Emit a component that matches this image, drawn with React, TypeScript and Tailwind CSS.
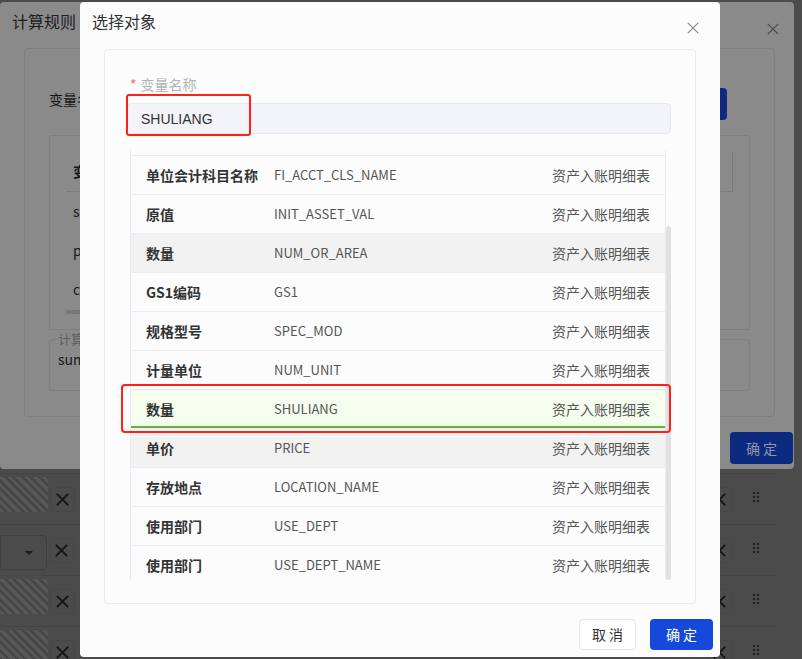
import React from "react";

const fields = [
  { name: "单位会计科目名称", code: "FI_ACCT_CLS_NAME" },
  { name: "原值", code: "INIT_ASSET_VAL" },
  { name: "数量", code: "NUM_OR_AREA", tone: "gray" },
  { name: "GS1编码", code: "GS1" },
  { name: "规格型号", code: "SPEC_MOD" },
  { name: "计量单位", code: "NUM_UNIT" },
  { name: "数量", code: "SHULIANG", tone: "picked" },
  { name: "单价", code: "PRICE", tone: "gray" },
  { name: "存放地点", code: "LOCATION_NAME" },
  { name: "使用部门", code: "USE_DEPT" },
  { name: "使用部门", code: "USE_DEPT_NAME" },
];

function CloseIcon({ className, width = 1.2 }: { className?: string; width?: number }) {
  return (
    <svg viewBox="0 0 12 12" className={className} fill="none" stroke="currentColor" strokeWidth={width}>
      <path d="M0.8 0.8L11.2 11.2M11.2 0.8L0.8 11.2" />
    </svg>
  );
}

// ---------------- page behind the dialogs ----------------
function BackRow({ kind }: { kind: "hatch" | "select" }) {
  return (
    <div className="flex h-[51px] w-[775px] items-start border-t border-[#444444]">
      {kind === "hatch" ? (
        <div className="mt-[3px] h-[35px] w-[48px] rounded-r-[3px] bg-[image:repeating-linear-gradient(45deg,#585858_0px,#585858_3px,#474747_3px,#474747_6px)]" />
      ) : (
        <div className="mt-[10px] flex h-[35px] w-[47px] items-center justify-end rounded-r-[4px] border border-[#3f3f3f] pr-[13px]">
          <span className="h-0 w-0 border-x-[4px] border-t-[4px] border-x-transparent border-t-[#1c1c1c]" />
        </div>
      )}
      <div className="ml-[2px] mt-[13px] flex h-[25px] w-[25px] items-center justify-center rounded-[3px] border border-[#474747]">
        <CloseIcon className="h-[13px] w-[13px] text-[#161616]" width={1.8} />
      </div>
      <div className="flex-1" />
      <div className="mt-[13px] flex h-[25px] w-[25px] items-center justify-center rounded-[3px] border border-[#474747]">
        <CloseIcon className="h-[13px] w-[13px] text-[#161616]" width={1.8} />
      </div>
      <div className="ml-[21px] mr-[16px] mt-[18px] grid grid-cols-2 gap-[2px]">
        {[0, 1, 2, 3, 4, 5].map((i) => (
          <span key={i} className="h-[2px] w-[2px] bg-[#1e1e1e]" />
        ))}
      </div>
    </div>
  );
}

function RuleDialog() {
  return (
    <div className="absolute left-0 top-[2px] flex h-[467px] w-[794px] flex-col rounded-[4px] bg-[#8a8a8a]">
      <div className="flex h-[46px] items-start justify-between pl-[12px] pr-[15px]">
        <span className="pt-[7px] text-[16px] leading-6 text-[#1d1d1d]">计算规则</span>
        <CloseIcon className="mt-[21px] h-[12px] w-[12px] text-[#474747]" />
      </div>
      <div className="ml-[24px] h-[369px] w-[751px] rounded-[4px] border border-[#7f7f7f]">
        <div className="mt-[39px] flex h-[32px] items-start justify-between pl-[24px] pr-[47px]">
          <span className="mt-[1px] text-[14px] leading-5 text-[#141414]">变量名称：</span>
          <span className="h-[32px] w-[60px] rounded-[4px] bg-[#0d2a7c]" />
        </div>
        <div className="ml-[24px] mt-[15px] h-[195px] w-[701px] rounded-[2px] border border-[#7f7f7f] px-[16px] pt-[15px]">
          <div className="flex h-[41px] items-center border-b border-r border-[#7b7b7b] pl-[7px] text-[14px] font-bold text-[#151515]">
            变量名称
          </div>
          {["sum", "price", "count"].map((t) => (
            <div key={t} className="flex h-[39px] items-center pl-[7px] text-[14px] text-[#181818]">
              {t}
            </div>
          ))}
          <div className="mt-[1px] h-[4px] w-[120px] rounded-full bg-[#777777]" />
        </div>
        <div className="relative ml-[24px] mt-[9px] h-[52px] w-[701px] rounded-[4px] border border-[#7f7f7f] px-[8px] pt-[6px]">
          <span className="absolute -top-[9px] left-[8px] bg-[#8a8a8a] text-[13px] leading-[16px] text-[#5e5e5e]">计算公式</span>
          <span className="text-[14px] leading-5 text-[#1a1a1a]">sum*price</span>
        </div>
      </div>
      <div className="mt-[15px] flex justify-end pr-[1px]">
        <span className="flex h-[32px] w-[63px] items-center justify-center rounded-[4px] bg-[#0b2a80] text-[14px] text-[#8f96a8]">
          确 定
        </span>
      </div>
    </div>
  );
}

// ---------------- 选择对象 ----------------
function PickDialog() {
  return (
    <div className="absolute left-[80px] top-[2px] flex h-[655px] w-[640px] flex-col rounded-[4px] bg-[#fcfcfd]">
      <div className="flex h-[47px] items-start justify-between pl-[12px] pr-[21px]">
        <span className="pt-[7px] text-[16px] leading-6 text-[#303133]">选择对象</span>
        <CloseIcon className="mt-[20px] h-[12px] w-[12px] text-[#8a8a8a]" />
      </div>

      <div className="mx-[24px] h-[555px] rounded-[4px] border border-[#e7eaf2] pl-[22px] pr-[24px]">
        <div className="flex pt-[24px] text-[14px] leading-5">
          <span className="ml-[3px] mr-[4px] text-[#f56c6c]">*</span>
          <span className="text-[#b3b3b3]">变量名称</span>
        </div>

        <div className="relative mt-[9px]">
          <div className="flex h-[31px] items-center rounded-[4px] border border-[#e6e8ef] bg-[#f3f4f9] pl-[13px] pt-[1px] font-['Liberation_Sans','Noto_Sans_CJK_SC',sans-serif] text-[14px] text-[#333]">
            SHULIANG
          </div>
          <div className="pointer-events-none absolute -left-[1px] -top-[9px] h-[42px] w-[125px] rounded-[3px] border-2 border-[#ff2117]" />
        </div>

        <div className="relative ml-[3px] mt-[16px] h-[430px] w-[541px]">
          <div className="flex h-full overflow-hidden">
            <div className="w-[536px] border-x border-[#e8ebf3] pt-[5px]">
              {fields.map((f, i) => (
                <div
                  key={i}
                  className={`flex h-[39px] items-center border-t ${
                    f.tone === "picked"
                      ? "border-[#dfe6f4] bg-[#f4fdee] shadow-[inset_0_-2px_0_#6ab13c]"
                      : f.tone === "gray"
                        ? "border-[#e9ecf4] bg-[#f2f2f2]"
                        : "border-[#e9ecf4]"
                  }`}
                >
                  <div className="w-[143px] pl-[15px] text-[14px] font-bold text-[#333]">{f.name}</div>
                  <div className="flex-1 text-[13px] text-[#555]">{f.code}</div>
                  <div className="pr-[15px] text-[14px] text-[#555]">资产入账明细表</div>
                </div>
              ))}
            </div>
            <div className="flex w-[5px] flex-col pt-[76px]">
              <div className="flex-1 rounded-full bg-[#e1e1e1]" />
            </div>
          </div>
          <div className="pointer-events-none absolute -left-[9px] top-[234px] h-[49px] w-[550px] rounded-[4px] border-2 border-[#ff2117]" />
        </div>
      </div>

      <div className="mt-[15px] flex justify-end gap-[14px] pr-[7px]">
        <button className="h-[31px] w-[57px] rounded-[4px] border border-[#e3e5ea] bg-white text-[14px] text-[#333]">
          取 消
        </button>
        <button className="h-[31px] w-[63px] rounded-[4px] bg-[#1649d9] text-[14px] text-white">确 定</button>
      </div>
    </div>
  );
}

export default function App() {
  return (
    <div className="relative h-[659px] w-[802px] overflow-hidden bg-[#4b4b4b] font-['Noto_Sans_CJK_SC',sans-serif]">
      <div className="pt-[473px]">
        <BackRow kind="hatch" />
        <BackRow kind="select" />
        <BackRow kind="hatch" />
        <BackRow kind="hatch" />
      </div>
      <RuleDialog />
      <PickDialog />
    </div>
  );
}
